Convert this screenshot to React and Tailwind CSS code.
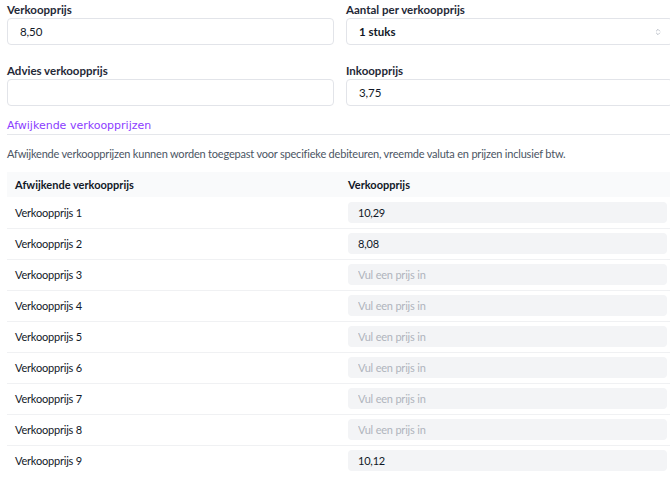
import { ChevronsUpDown } from "lucide-react";

const prices = [
  { label: "Verkoopprijs 1", value: "10,29" },
  { label: "Verkoopprijs 2", value: "8,08" },
  { label: "Verkoopprijs 3", value: "" },
  { label: "Verkoopprijs 4", value: "" },
  { label: "Verkoopprijs 5", value: "" },
  { label: "Verkoopprijs 6", value: "" },
  { label: "Verkoopprijs 7", value: "" },
  { label: "Verkoopprijs 8", value: "" },
  { label: "Verkoopprijs 9", value: "10,12" },
];

function Field({ label, children }) {
  return (
    <div className="flex flex-col">
      <label className="text-[11.5px] font-bold text-[#1f2937] leading-[15px] mb-[1px]">{label}</label>
      {children}
    </div>
  );
}

function TextInput({ value }) {
  return (
    <input
      defaultValue={value}
      className="h-[27px] w-full rounded-[4px] border border-[#e2e4e9] bg-white px-[12px] text-[11.5px] tracking-[-0.1px] text-[#111827] outline-none"
    />
  );
}

export default function App() {
  return (
    <div
      className="w-[670px] h-[479px] overflow-hidden bg-white text-[#111827]"
      style={{ fontFamily: 'Lato, "Liberation Sans", sans-serif' }}
    >
      <div className="w-[673px] pl-[7px] pt-[2px]">
        {/* Prices */}
        <div className="grid grid-cols-2 gap-x-[12px] gap-y-[18px]">
          <Field label="Verkoopprijs">
            <TextInput value="8,50" />
          </Field>
          <Field label="Aantal per verkoopprijs">
            <div className="relative flex h-[27px] items-center rounded-[4px] border border-[#e2e4e9] bg-white px-[12px]">
              <span className="text-[11.5px] font-bold">1 stuks</span>
              <ChevronsUpDown className="absolute right-[10px] top-[9px] h-[8px] w-[8px] text-[#9ca3af]" />
            </div>
          </Field>
          <Field label="Advies verkoopprijs">
            <TextInput value="" />
          </Field>
          <Field label="Inkoopprijs">
            <TextInput value="3,75" />
          </Field>
        </div>

        {/* Afwijkende verkoopprijzen */}
        <div
          className="mt-[12px] border-b border-[#e5e7eb] pb-[1px] text-[11px] leading-[15px] text-[#8b3dff]"
          style={{ fontFamily: '"DejaVu Sans", sans-serif' }}
        >
          Afwijkende verkoopprijzen
        </div>
        <p className="mt-[11px] text-[11px] leading-[15px] tracking-[-0.2px] text-[#4b5563]">
          Afwijkende verkoopprijzen kunnen worden toegepast voor specifieke debiteuren, vreemde valuta en prijzen inclusief btw.
        </p>

        <table className="mt-[11px] w-full border-collapse text-[11px] leading-[15px]">
          <thead>
            <tr className="bg-[#f9fafb]">
              <th className="h-[25px] w-[333px] px-[8px] text-left font-bold">Afwijkende verkoopprijs</th>
              <th className="h-[25px] px-[8px] text-left font-bold">Verkoopprijs</th>
            </tr>
          </thead>
          <tbody>
            {prices.map((p, i) => (
              <tr key={p.label} className={i < prices.length - 1 ? "border-b border-[#f0f1f3]" : ""}>
                <td className="h-[31px] px-[8px] tracking-[-0.2px]">{p.label}</td>
                <td className="h-[31px] pl-[8px] pr-[6px]">
                  <input
                    defaultValue={p.value}
                    placeholder="Vul een prijs in"
                    className="h-[21px] w-full rounded-[4px] bg-[#f3f4f6] px-[10px] text-[11px] tracking-[-0.2px] text-[#111827] outline-none placeholder:text-[#b0b5bd]"
                  />
                </td>
              </tr>
            ))}
          </tbody>
        </table>
      </div>
    </div>
  );
}
